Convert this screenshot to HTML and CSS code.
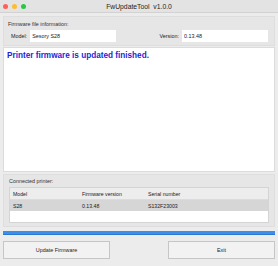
FILE: index.html
```html
<!DOCTYPE html>
<html lang="en">
<head>
    <meta charset="UTF-8">
    <title>FwUpdateTool</title>
    <link rel="stylesheet" href="styles.css">
</head>
<body>
<div class="window">
    <div class="titlebar">
        <div class="lights">
            <span class="light red"></span>
            <span class="light yellow"></span>
            <span class="light green"></span>
        </div>
        <div class="title">FwUpdateTool&nbsp;&nbsp;v1.0.0</div>
        <div></div>
    </div>

    <div class="content">
        <div class="group file-info">
            <div class="group-title">Firmware file information:</div>
            <div class="fields">
                <label class="field">
                    <span>Model:</span>
                    <input type="text" value="Sesory S28" readonly>
                </label>
                <label class="field">
                    <span>Version:</span>
                    <input type="text" value="0.13.48" readonly>
                </label>
            </div>
        </div>

        <div class="message">Printer firmware is updated finished.</div>

        <div class="group printers">
            <div class="group-title">Connected printer:</div>
            <div class="table">
                <div class="row head">
                    <div>Model</div>
                    <div>Firmware version</div>
                    <div>Serial number</div>
                </div>
                <div class="row selected">
                    <div>S28</div>
                    <div>0.13.48</div>
                    <div>S132F23003</div>
                </div>
            </div>
        </div>

        <div class="progress"><div class="bar" style="width: 100%"></div></div>

        <div class="buttons">
            <button>Update Firmware</button>
            <button>Exit</button>
        </div>
    </div>
</div>
</body>
</html>
```

FILE: styles.css
```css
body {
    margin: 0;
    font-family: "Liberation Sans", Arial, sans-serif;
    color: #222;
    background: #ececec;
}
.window {
    width: 278px;
    height: 266px;
    background: #ececec;
}
.titlebar {
    height: 12px;
    display: grid;
    grid-template-columns: 1fr auto 1fr;
    align-items: center;
    background: #e3e3e3;
    border-bottom: 1px solid #d2d2d2;
}
.lights {
    display: flex;
    gap: 4px;
    padding-left: 3px;
}
.light {
    width: 5px;
    height: 5px;
    border-radius: 50%;
}
.red { background: #fe5f57; }
.yellow { background: #febc2e; }
.green { background: #28c840; }
.title {
    font-size: 6.8px;
    color: #1e1e1e;
}
.content {
    padding: 3px 3px 0;
}
.group {
    background: #e6e6e6;
    border: 1px solid #dedede;
    padding: 4px 4px 3px;
}
.group-title {
    font-size: 5.4px;
    color: #333;
}
.fields {
    display: flex;
    justify-content: space-between;
    padding: 3px 2px 0 3px;
}
.field {
    display: flex;
    align-items: center;
    gap: 3px;
    font-size: 5.4px;
}
.field input {
    width: 86px;
    height: 12px;
    box-sizing: border-box;
    border: none;
    background: #fff;
    font-family: inherit;
    font-size: 5.4px;
    color: #222;
    padding: 0 2px;
    margin: 0;
}
.message {
    margin-top: 1px;
    height: 125px;
    background: #fff;
    border: 1px solid #dcdcdc;
    padding: 3px 3px;
    box-sizing: border-box;
    color: #1f1fd6;
    font-weight: bold;
    font-size: 8.2px;
}
.printers {
    margin-top: 2px;
    padding: 3px 5px 3px;
}
.table {
    margin-top: 3px;
    height: 36px;
    background: #fff;
    border: 1px solid #d4d4d4;
    box-sizing: border-box;
}
.row {
    display: grid;
    grid-template-columns: 69px 66px 1fr;
    height: 11px;
    align-items: center;
    padding-left: 3px;
    font-size: 5.2px;
}
.row.head {
    background: #ededed;
    border-bottom: 1px solid #dcdcdc;
}
.row.selected {
    background: #d6d6d6;
}
.progress {
    margin-top: 4px;
    height: 4px;
    background: #dcdcdc;
}
.bar {
    height: 100%;
    background: #3b8fe8;
    border-bottom: 1px solid #2a78cf;
    box-sizing: border-box;
}
.buttons {
    display: flex;
    justify-content: space-between;
    margin-top: 6px;
}
.buttons button {
    width: 107px;
    height: 18px;
    background: #f2f2f2;
    border: 1px solid #c6c6c6;
    font-family: inherit;
    font-size: 5.4px;
    color: #222;
    padding: 0;
}
```
